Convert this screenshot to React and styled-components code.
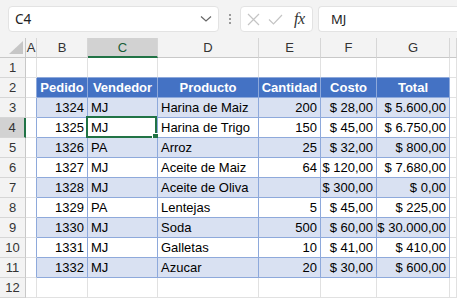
import React from "react";
import styled, { createGlobalStyle } from "styled-components";

const GlobalStyle = createGlobalStyle`
    body {
        margin: 0;
        background: #ffffff;
        font-family: "Liberation Sans", Arial, sans-serif;
    }
`;

const COLS = ["A", "B", "C", "D", "E", "F", "G", "H"];
const WIDTHS = "26px 11px 51px 70px 101px 62px 56px 73px 1fr";

const rows = [
    ["1324", "MJ", "Harina de Maiz", "200", "$ 28,00", "$ 5.600,00"],
    ["1325", "MJ", "Harina de Trigo", "150", "$ 45,00", "$ 6.750,00"],
    ["1326", "PA", "Arroz", "25", "$ 32,00", "$ 800,00"],
    ["1327", "MJ", "Aceite de Maiz", "64", "$ 120,00", "$ 7.680,00"],
    ["1328", "MJ", "Aceite de Oliva", "", "$ 300,00", "$ 0,00"],
    ["1329", "PA", "Lentejas", "5", "$ 45,00", "$ 225,00"],
    ["1330", "MJ", "Soda", "500", "$ 60,00", "$ 30.000,00"],
    ["1331", "MJ", "Galletas", "10", "$ 41,00", "$ 410,00"],
    ["1332", "MJ", "Azucar", "20", "$ 30,00", "$ 600,00"],
];

const headers = ["Pedido", "Vendedor", "Producto", "Cantidad", "Costo", "Total"];
// text alignment per table column (B..G)
const align = ["right", "left", "left", "right", "right", "right"];

const Toolbar = styled.div`
    display: flex;
    align-items: flex-start;
    height: 38px;
    box-sizing: border-box;
    padding: 6px 0 0 8px;
    background: #f3f3f3;
`;

const NameBox = styled.div`
    width: 211px;
    height: 26px;
    box-sizing: border-box;
    display: flex;
    align-items: center;
    justify-content: space-between;
    padding: 0 6px 0 6px;
    background: #fff;
    border: 1px solid #e3e3e3;
    border-radius: 4px;
    font-family: "Noto Sans", "Open Sans", sans-serif;
    font-size: 13.5px;
    color: #222;
`;

const Dots = styled.div`
    width: 21px;
    height: 26px;
    display: flex;
    flex-direction: column;
    align-items: center;
    justify-content: center;
    gap: 2px;
    span {
        width: 2px;
        height: 2px;
        background: #9a9a9a;
    }
`;

const FormulaButtons = styled.div`
    width: 73px;
    height: 26px;
    box-sizing: border-box;
    display: flex;
    align-items: center;
    padding-left: 6px;
    gap: 8px;
    background: #fff;
    border: 1px solid #e3e3e3;
    border-radius: 4px;
`;

const Fx = styled.span`
    font-family: "Liberation Serif", "Times New Roman", serif;
    font-style: italic;
    font-size: 16px;
    color: #333;
    margin-left: 3px;
    letter-spacing: -0.5px;
`;

const FormulaInput = styled.div`
    flex: 1;
    height: 26px;
    box-sizing: border-box;
    margin-left: 5px;
    display: flex;
    align-items: center;
    padding-left: 12px;
    background: #fff;
    border: 1px solid #e3e3e3;
    border-right: none;
    border-radius: 4px 0 0 4px;
    font-family: "Noto Sans", "Open Sans", sans-serif;
    font-size: 13px;
    color: #222;
`;

const Sheet = styled.div`
    display: grid;
    grid-template-columns: ${WIDTHS};
    grid-auto-rows: 20px;
`;

const Corner = styled.div`
    box-sizing: border-box;
    background: #f3f3f3;
    border-right: 1px solid #c8c8c8;
    border-bottom: 1px solid #c8c8c8;
    display: flex;
    align-items: flex-end;
    justify-content: flex-end;
    padding: 0 2px 3px 0;
`;

const ColHead = styled.div`
    box-sizing: border-box;
    background: ${p => (p.$active ? "#d2d2d2" : "#f3f3f3")};
    border-right: 1px solid #d6d6d6;
    border-bottom: ${p => (p.$active ? "2px solid #217346" : "1px solid #c8c8c8")};
    display: flex;
    align-items: center;
    justify-content: center;
    font-size: 13px;
    color: ${p => (p.$active ? "#185c37" : "#333")};
    padding-top: ${p => (p.$active ? "1px" : "0")};
`;

const RowHead = styled.div`
    box-sizing: border-box;
    background: ${p => (p.$active ? "#d2d2d2" : "#f3f3f3")};
    border-right: ${p => (p.$active ? "2px solid #217346" : "1px solid #c8c8c8")};
    border-bottom: 1px solid #d6d6d6;
    display: flex;
    align-items: center;
    justify-content: center;
    font-size: 13px;
    color: #333;
`;

const Cell = styled.div`
    position: relative;
    box-sizing: border-box;
    background: ${p => (p.$head ? "#4472c4" : p.$band ? "#d9e1f2" : "#fff")};
    border-right: 1px solid ${p => (p.$blueRight ? "#8ea9db" : "#e1e1e1")};
    border-bottom: 1px solid ${p => (p.$blueBottom ? "#8ea9db" : "#e1e1e1")};
    padding: 0 3px;
    display: flex;
    align-items: center;
    justify-content: ${p => (p.$align === "right" ? "flex-end" : p.$align === "center" ? "center" : "flex-start")};
    white-space: nowrap;
    overflow: visible;
    font-size: 13px;
    font-weight: ${p => (p.$head ? "bold" : "normal")};
    color: ${p => (p.$head ? "#fff" : "#000")};
`;

const Selection = styled.div`
    position: absolute;
    top: -2px;
    left: -2px;
    right: 0;
    bottom: -1px;
    border: 2px solid #217346;
    pointer-events: none;
`;

const Handle = styled.div`
    position: absolute;
    right: -4px;
    bottom: -4px;
    width: 5px;
    height: 5px;
    background: #217346;
    border: 1px solid #fff;
`;

function Chevron() {
    return (
        <svg width="12" height="8" viewBox="0 0 12 8">
            <path d="M1 1.5 L6 6 L11 1.5" fill="none" stroke="#666" strokeWidth="1.2" />
        </svg>
    );
}

function CrossIcon() {
    return (
        <svg width="13" height="13" viewBox="0 0 13 13">
            <path d="M1 1 L12 12 M12 1 L1 12" stroke="#c4c4c4" strokeWidth="1.2" />
        </svg>
    );
}

function CheckIcon() {
    return (
        <svg width="15" height="11" viewBox="0 0 15 11">
            <path d="M1 5.5 L5.5 10 L14 1" fill="none" stroke="#c4c4c4" strokeWidth="1.2" />
        </svg>
    );
}

function cellFor(r, ci) {
    // r = sheet row number, ci = index into COLS
    const col = COLS[ci];
    const inTable = r >= 2 && r <= 11 && ci >= 1 && ci <= 6;
    const props = { key: col + r };
    if (inTable) {
        props.$blueRight = true;
        props.$blueBottom = true;
        if (r === 2) {
            props.$head = true;
            props.$align = "center";
            return <Cell {...props}>{headers[ci - 1]}</Cell>;
        }
        const data = rows[r - 3];
        props.$band = r % 2 === 1;
        props.$align = align[ci - 1];
        const isSel = r === 4 && col === "C";
        return (
            <Cell {...props}>
                {data[ci - 1]}
                {isSel && (
                    <Selection>
                        <Handle />
                    </Selection>
                )}
            </Cell>
        );
    }
    if (col === "A" && r >= 2 && r <= 11) props.$blueRight = true;
    if (r === 1 && ci >= 1 && ci <= 6) props.$blueBottom = true;
    return <Cell {...props} />;
}

export default function App() {
    const sheetRows = [];
    for (let r = 1; r <= 12; r++) {
        sheetRows.push(
            <RowHead key={"h" + r} $active={r === 4}>{r}</RowHead>
        );
        COLS.forEach((c, ci) => sheetRows.push(cellFor(r, ci)));
    }

    return (
        <>
            <GlobalStyle />
            <Toolbar>
                <NameBox>
                    <span>C4</span>
                    <Chevron />
                </NameBox>
                <Dots>
                    <span />
                    <span />
                    <span />
                </Dots>
                <FormulaButtons>
                    <CrossIcon />
                    <CheckIcon />
                    <Fx>fx</Fx>
                </FormulaButtons>
                <FormulaInput>MJ</FormulaInput>
            </Toolbar>
            <Sheet>
                <Corner>
                    <svg width="14" height="13" viewBox="0 0 14 13">
                        <polygon points="14,0 14,13 0,13" fill="#c6c6c6" />
                    </svg>
                </Corner>
                {COLS.map(c => (
                    <ColHead key={c} $active={c === "C"}>
                        {c === "H" ? "" : c}
                    </ColHead>
                ))}
                {sheetRows}
            </Sheet>
        </>
    );
}
